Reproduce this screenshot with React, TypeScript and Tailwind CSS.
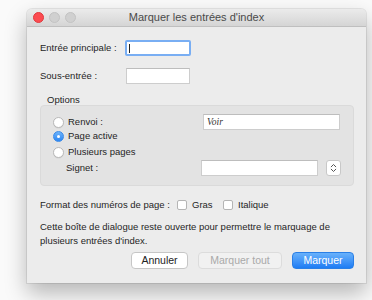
import React from 'react';

const font = { fontFamily: '"Liberation Sans", Arial, sans-serif' };

/* ---- little mac controls ---- */
const Radio = ({ on = false }: { on?: boolean }) =>
  on ? (
    <span className="w-[11px] h-[11px] rounded-full bg-gradient-to-b from-[#6cb3fa] to-[#2a86f3] border border-[#3a8ae8] flex items-center justify-center shrink-0">
      <span className="w-[3px] h-[3px] rounded-full bg-white" />
    </span>
  ) : (
    <span className="w-[11px] h-[11px] rounded-full bg-white border border-[#b9b9b9] shadow-[0_0.5px_0.5px_rgba(0,0,0,0.08)] shrink-0" />
  );

const Checkbox = () => (
  <span className="w-[10px] h-[10px] rounded-[2px] bg-white border border-[#b5b5b5] shrink-0" />
);

const Field = ({ className = '', children }: { className?: string; children?: React.ReactNode }) => (
  <div className={`h-[16px] bg-white border border-[#cdcdcd] border-t-[#bdbdbd] flex items-center ${className}`}>{children}</div>
);

export default function App() {
  return (
    <div className="w-[372px] h-[300px] bg-[#fafafa] overflow-hidden pt-[9px] pl-[27px] text-[#1f1f1f]" style={font}>
      {/* window */}
      <div className="w-[339px] h-[274px] rounded-t-[5px] bg-[#ececec] shadow-[0_10px_22px_rgba(0,0,0,0.28),0_0_0_1px_rgba(0,0,0,0.08)] flex flex-col">
        {/* title bar */}
        <div className="h-[18px] rounded-t-[5px] bg-gradient-to-b from-[#ebebeb] to-[#d5d5d5] border-b border-[#bfbfbf] flex items-center relative shrink-0">
          <div className="flex items-center gap-[5px] pl-[6px]">
            <span className="w-[11px] h-[11px] rounded-full bg-[#fc4b50] border border-[#e0393e]" />
            <span className="w-[11px] h-[11px] rounded-full bg-[#d0d0d0] border border-[#c3c3c3]" />
            <span className="w-[11px] h-[11px] rounded-full bg-[#d0d0d0] border border-[#c3c3c3]" />
          </div>
          <div className="absolute inset-0 flex items-center justify-center text-[11px] text-[#4a4a4a] pointer-events-none">
            Marquer les entrées d'index
          </div>
        </div>

        {/* body */}
        <div className="flex flex-col pl-[13px] pr-[12px] pt-[13px] text-[9.5px]">
          <div className="flex items-center h-[16px]">
            <span className="w-[85px]">Entrée principale :</span>
            <div className="w-[66px] h-[16px] rounded-[2px] border-[2px] border-[#79aef3] bg-white flex items-center pl-[2px]">
              <span className="w-px h-[9px] bg-[#222]" />
            </div>
          </div>
          <div className="flex items-center h-[16px] mt-[12px]">
            <span className="w-[86px]">Sous-entrée :</span>
            <Field className="w-[64px]" />
          </div>

          <div className="mt-[10px] pl-[7px] leading-[12px]">Options</div>

          {/* group box */}
          <div className="mt-[-1px] w-[314px] h-[81px] rounded-[4px] bg-[#e3e3e3] border border-[#dadada] pt-[8px] pl-[12px] flex flex-col">
            <div className="flex items-center h-[16px]">
              <div className="w-[150px] flex items-center gap-[4px]">
                <Radio />
                <span>Renvoi :</span>
              </div>
              <Field className="w-[137px] pl-[3px]">
                <span className="italic text-[9.5px] text-[#333]" style={{ fontFamily: '"Liberation Serif", "Times New Roman", serif' }}>Voir</span>
              </Field>
            </div>
            <div className="flex items-center gap-[4px] h-[14px] mt-[-1px]">
              <Radio on />
              <span>Page active</span>
            </div>
            <div className="flex items-center gap-[4px] h-[14px] mt-[2px]">
              <Radio />
              <span>Plusieurs pages</span>
            </div>
            <div className="flex items-center h-[16px] mt-[1px]">
              <span className="w-[148px] pl-[13px]">Signet :</span>
              <Field className="w-[117px]" />
              <div className="ml-[8px] w-[15px] h-[16px] rounded-[3px] bg-white border border-[#c8c8c8] flex items-center justify-center">
                <svg width="7" height="10" viewBox="0 0 7 10" fill="none" stroke="#555" strokeWidth="1" strokeLinecap="round" strokeLinejoin="round">
                  <path d="M1.2 3.8 3.5 1.5 5.8 3.8" />
                  <path d="M1.2 6.2 3.5 8.5 5.8 6.2" />
                </svg>
              </div>
            </div>
          </div>

          {/* page number format */}
          <div className="flex items-center h-[14px] mt-[12px]">
            <span className="w-[137px]">Format des numéros de page :</span>
            <Checkbox />
            <span className="ml-[5px] w-[31px]">Gras</span>
            <Checkbox />
            <span className="ml-[5px]">Italique</span>
          </div>

          <p className="mt-[8px] leading-[13.5px] w-[300px]">
            Cette boîte de dialogue reste ouverte pour permettre le marquage de plusieurs entrées d'index.
          </p>

          {/* buttons */}
          <div className="flex justify-end items-center gap-[10px] mt-[5px] text-[10.5px]">
            <button className="w-[57px] h-[17px] rounded-[4px] bg-white border border-[#c6c6c6] text-[#222] flex items-center justify-center">
              Annuler
            </button>
            <button className="w-[84px] h-[17px] rounded-[4px] bg-[#f1f1f1] border border-[#dcdcdc] text-[#a9a9a9] flex items-center justify-center">
              Marquer tout
            </button>
            <button className="w-[62px] h-[17px] rounded-[4px] bg-gradient-to-b from-[#68b1fb] to-[#1c7cf4] border border-[#2a7fe6] text-white flex items-center justify-center">
              Marquer
            </button>
          </div>
        </div>
      </div>
    </div>
  );
}
